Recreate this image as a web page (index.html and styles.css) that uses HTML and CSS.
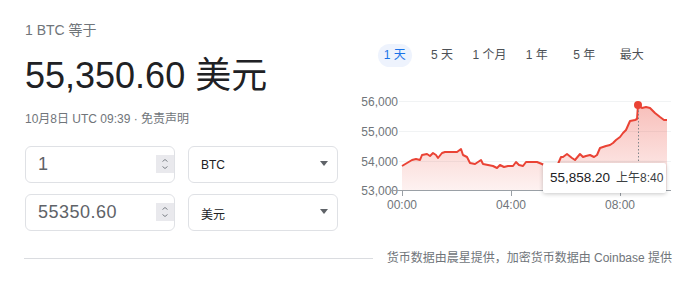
FILE: index.html
```html
<!DOCTYPE html>
<html>
	<head>
		<meta charset="utf-8">
		<title>BTC 换算</title>
		<link rel="stylesheet" href="styles.css">
	</head>
	<body>
		<div class="page">
			<div class="main">
				<div class="conv">
					<div class="eq">1 BTC 等于</div>
					<div class="val">55,350.60 美元</div>
					<div class="meta">10月8日 UTC 09:39 · 免责声明</div>
					<div class="rows">
						<div class="row">
							<div class="num">
								<span class="txt">1</span>
								<span class="spin">
									<svg width="18" height="18" viewBox="0 0 18 18"><path d="M6.5 6.5L9 4.5L11.5 6.5M6.5 11.5L9 13.5L11.5 11.5" fill="none" stroke="#7d8288" stroke-width="1"/></svg>
								</span>
							</div>
							<div class="sel"><span>BTC</span><span class="caret"></span></div>
						</div>
						<div class="row">
							<div class="num">
								<span class="txt">55350.60</span>
								<span class="spin">
									<svg width="18" height="18" viewBox="0 0 18 18"><path d="M6.5 6.5L9 4.5L11.5 6.5M6.5 11.5L9 13.5L11.5 11.5" fill="none" stroke="#7d8288" stroke-width="1"/></svg>
								</span>
							</div>
							<div class="sel"><span>美元</span><span class="caret"></span></div>
						</div>
					</div>
				</div>
				<div class="chart">
					<div class="tabs">
						<span class="tab on"><span>1 天</span></span>
						<span class="tab"><span>5 天</span></span>
						<span class="tab"><span>1 个月</span></span>
						<span class="tab"><span>1 年</span></span>
						<span class="tab"><span>5 年</span></span>
						<span class="tab"><span>最大</span></span>
					</div>
					<div class="plot">
						<svg width="322" height="130" viewBox="350 85 322 130">
							<defs>
								<linearGradient id="fill" x1="0" y1="105" x2="0" y2="190" gradientUnits="userSpaceOnUse">
									<stop offset="0" stop-color="#ea4335" stop-opacity="0.34"/>
									<stop offset="1" stop-color="#ea4335" stop-opacity="0.07"/>
								</linearGradient>
							</defs>
							<!-- 网格 -->
							<g stroke="#f1f3f4" stroke-width="1">
								<line x1="399" y1="101.5" x2="671" y2="101.5"/>
								<line x1="399" y1="131.5" x2="671" y2="131.5"/>
								<line x1="399" y1="161.5" x2="671" y2="161.5"/>
							</g>
							<g font-family="Liberation Sans, Noto Sans CJK SC, sans-serif" font-size="12" fill="#70757a" text-anchor="end">
								<text x="398" y="105.5">56,000</text>
								<text x="398" y="135.5">55,000</text>
								<text x="398" y="165.5">54,000</text>
								<text x="398" y="195">53,000</text>
							</g>
							<polygon fill="url(#fill)" points="402,166 407,163 412,160 416,159 420,160 422,155 427,154 430,156 433,153 436,155 438,158 442,153 445,152 452,152 457,152 461,149 463,155 467,157 470,163 475,164 478,162 481,160 483,164 488,165 493,166 497,168 500,165 504,167 508,166 513,166 516,162 519,165 523,166 526,162 532,162 537,162 542,164 546,166 550,166 555,165 558,164 561,157 563,157 567,154 572,158 575,160 580,154 583,157 586,156 590,155 594,157 597,155 600,148 603,147 606,146 610,145 613,143 616,140 620,137 623,133 626,130 630,121 635,120 637,119 638,105 642,108 646,107 650,108 655,113 660,117 664,120 667,120 667,190 402,190"/>
							<polyline fill="none" stroke="#ea4335" stroke-width="2" stroke-linejoin="round" points="402,166 407,163 412,160 416,159 420,160 422,155 427,154 430,156 433,153 436,155 438,158 442,153 445,152 452,152 457,152 461,149 463,155 467,157 470,163 475,164 478,162 481,160 483,164 488,165 493,166 497,168 500,165 504,167 508,166 513,166 516,162 519,165 523,166 526,162 532,162 537,162 542,164 546,166 550,166 555,165 558,164 561,157 563,157 567,154 572,158 575,160 580,154 583,157 586,156 590,155 594,157 597,155 600,148 603,147 606,146 610,145 613,143 616,140 620,137 623,133 626,130 630,121 635,120 637,119 638,105 642,108 646,107 650,108 655,113 660,117 664,120 667,120"/>
							<line x1="638.5" y1="107" x2="638.5" y2="190" stroke="#80868b" stroke-width="1" stroke-dasharray="1.5 2"/>
							<circle cx="638" cy="105" r="4" fill="#ea4335"/>
							<!-- 横轴 -->
							<g stroke="#9aa0a6" stroke-width="1">
								<line x1="390" y1="190.5" x2="671" y2="190.5"/>
								<line x1="402.5" y1="190" x2="402.5" y2="196"/>
								<line x1="511.5" y1="190" x2="511.5" y2="196"/>
								<line x1="620.5" y1="190" x2="620.5" y2="196"/>
							</g>
							<g font-family="Liberation Sans, Noto Sans CJK SC, sans-serif" font-size="12" fill="#70757a" text-anchor="middle">
								<text x="402" y="209">00:00</text>
								<text x="511" y="209">04:00</text>
								<text x="620" y="209">08:00</text>
							</g>
						</svg>
						<div class="tip"><span class="price">55,858.20</span><span class="time">上午8:40</span></div>
					</div>
				</div>
			</div>
			<div class="foot">
				<div class="line"></div>
				<span>货币数据由晨星提供，加密货币数据由 Coinbase 提供</span>
			</div>
		</div>
	</body>
</html>
```

FILE: styles.css
```css
*{
	margin: 0;
	padding: 0;
	box-sizing: border-box;
}
body{
	font-family: "Liberation Sans", "Noto Sans CJK SC", sans-serif;
	color: #202124;
	background: #fff;
}
.page{
	width: 700px;
	padding: 20px 28px 0 25px;
}
.main{
	display: flex;
}
.conv{
	width: 325px;
}
.eq{
	font-size: 14px;
	line-height: 20px;
	color: #70757a;
}
.val{
	margin-top: 14px;
	font-size: 36px;
	line-height: 44px;
	color: #202124;
}
.meta{
	margin-top: 13px;
	font-size: 12px;
	line-height: 16px;
	color: #70757a;
}
.rows{
	margin-top: 19px;
	display: flex;
	flex-direction: column;
	gap: 11px;
}
.row{
	display: flex;
	gap: 13px;
}
.num,.sel{
	width: 150px;
	height: 37px;
	border: 1px solid #dfe1e5;
	border-radius: 6px;
	display: flex;
	align-items: center;
}
.num{
	padding-left: 12px;
}
.num .txt{
	flex: 1;
	font-size: 18px;
	letter-spacing: 0.5px;
	color: #5f6368;
}
.spin{
	width: 18px;
	height: 18px;
	background: #e9e9ed;
	display: block;
	align-self: center;
	margin-top: -2px;
}
.spin svg{
	display: block;
}
.sel{
	padding: 0 9px 0 12px;
	font-size: 12px;
	color: #202124;
}
.sel span:first-child{
	flex: 1;
	padding-top: 1px;
}
.caret{
	width: 0;
	height: 0;
	border-left: 4.5px solid transparent;
	border-right: 4.5px solid transparent;
	border-top: 5px solid #5f6368;
	margin-top: -2px;
}
.chart{
	flex: 1;
	padding-top: 24px;
}
.tabs{
	margin-left: 21px;
	display: grid;
	grid-template-columns: repeat(6, 47.4px);
	height: 23px;
}
.tab{
	display: flex;
	justify-content: center;
	align-items: center;
	font-size: 12px;
	color: #4d5156;
}
.tab span{
	display: block;
	height: 23px;
	line-height: 23px;
	padding: 0 6px;
	border-radius: 12px;
	white-space: nowrap;
}
.tab.on span{
	background: #eef3fd;
	color: #1a73e8;
}
.plot{
	position: relative;
	margin-top: 18px;
	height: 130px;
}
.plot svg{
	display: block;
}
.tip{
	position: absolute;
	left: 193px;
	top: 78px;
	width: 123px;
	height: 30px;
	background: #fff;
	border-radius: 2px;
	box-shadow: 0 1px 4px rgba(0,0,0,0.22);
	line-height: 30px;
	padding-left: 7px;
	color: #202124;
	white-space: nowrap;
	display: flex;
	gap: 6px;
}
.tip .price{
	font-size: 13.5px;
}
.tip .time{
	font-size: 12px;
	color: #3c4043;
}
.foot{
	margin-top: 19px;
	margin-left: -1px;
	display: flex;
	align-items: center;
	gap: 14px;
	height: 16px;
}
.foot .line{
	flex: 1;
	height: 1px;
	background: #dadce0;
}
.foot span{
	font-size: 12px;
	line-height: 16px;
	color: #70757a;
	white-space: nowrap;
}
```
